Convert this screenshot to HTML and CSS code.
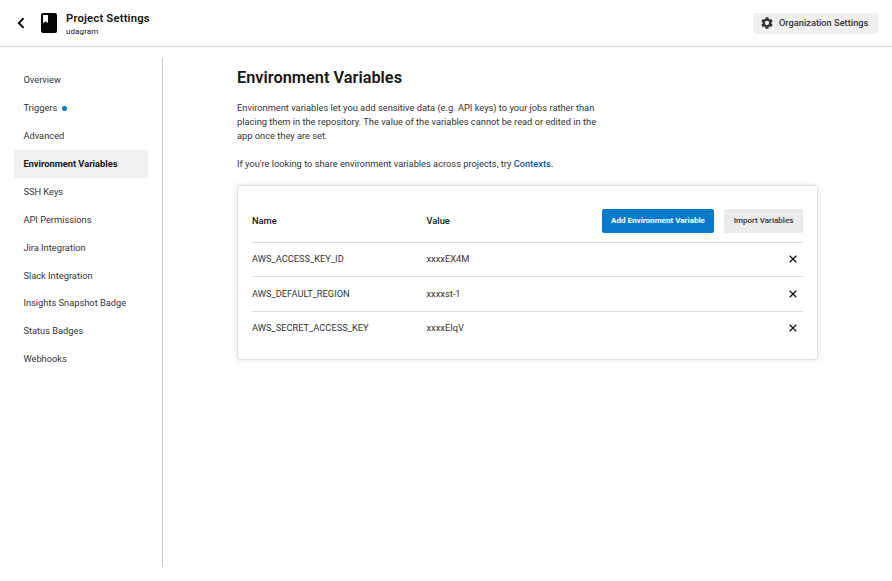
FILE: index.html
```html
<!DOCTYPE html>
<html lang="en">
<head>
<meta charset="utf-8">
<title>Project Settings</title>
<link rel="stylesheet" href="styles.css">
</head>
<body>
<header class="header">
  <svg class="back" viewBox="0 0 8 12"><path d="M6.600 1.200 1.800 6l4.800 4.800" fill="none" stroke="#161616" stroke-width="2"/></svg>
  <svg class="book" viewBox="0 0 16 20"><path fill="#050505" fill-rule="evenodd" d="M2 0h12a2 2 0 0 1 2 2v16a2 2 0 0 1-2 2H2a2 2 0 0 1-2-2V2a2 2 0 0 1 2-2zm0 2v8l2.500-1.500L7 10V2z"/></svg>
  <div class="heading">
    <div class="project">Project Settings</div>
    <div class="repo">udagram</div>
  </div>
  <button class="org"><svg class="gear" viewBox="2 2 20 20"><path fill="#333" d="M19.140 12.940c.040-.300.060-.610.060-.940 0-.320-.020-.640-.070-.940l2.030-1.580a.49.49 0 0 0 .120-.610l-1.920-3.320a.488.488 0 0 0-.590-.220l-2.390.960c-.500-.380-1.030-.700-1.620-.940l-.360-2.540a.484.484 0 0 0-.480-.410h-3.840c-.240 0-.430.170-.470.410l-.360 2.540c-.590.240-1.130.570-1.620.940l-2.390-.960a.488.488 0 0 0-.590.220L2.740 8.870c-.120.210-.080.470.120.610l2.030 1.580c-.050.300-.090.630-.090.940s.020.640.070.940l-2.030 1.580a.49.49 0 0 0-.120.610l1.920 3.320c.120.220.370.290.590.220l2.390-.960c.500.380 1.030.700 1.620.940l.360 2.540c.050.240.240.410.480.410h3.840c.240 0 .440-.170.470-.410l.360-2.540c.590-.240 1.130-.560 1.620-.940l2.390.960c.220.080.470 0 .590-.220l1.920-3.320a.49.49 0 0 0-.120-.610zM12 15.600a3.600 3.600 0 1 1 0-7.200 3.600 3.600 0 0 1 0 7.200z"/></svg><span>Organization Settings</span></button>
</header>
<div class="body">
  <nav class="nav">
    <a class="item">Overview</a>
    <a class="item">Triggers<i class="dot"></i></a>
    <a class="item">Advanced</a>
    <a class="item active">Environment Variables</a>
    <a class="item">SSH Keys</a>
    <a class="item">API Permissions</a>
    <a class="item">Jira Integration</a>
    <a class="item">Slack Integration</a>
    <a class="item">Insights Snapshot Badge</a>
    <a class="item">Status Badges</a>
    <a class="item">Webhooks</a>
  </nav>
  <main class="main">
    <h1>Environment Variables</h1>
    <p>Environment variables let you add sensitive data (e.g. API keys) to your jobs rather than<br>placing them in the repository. The value of the variables cannot be read or edited in the<br>app once they are set.</p>
    <p>If you're looking to share environment variables across projects, try <a class="link">Contexts.</a></p>
    <section class="card">
      <div class="row head">
        <span>Name</span><span>Value</span>
        <div class="actions"><button class="btn primary">Add Environment Variable</button><button class="btn">Import Variables</button></div>
      </div>
      <div class="row"><span>AWS_ACCESS_KEY_ID</span><span>xxxxEX4M</span><svg class="x" viewBox="0 0 8 8"><path d="m.7.7 6.600 6.600m0-6.600L.7 7.300"/></svg></div>
      <div class="row"><span>AWS_DEFAULT_REGION</span><span>xxxxst-1</span><svg class="x" viewBox="0 0 8 8"><path d="m.7.7 6.600 6.600m0-6.600L.7 7.300"/></svg></div>
      <div class="row"><span>AWS_SECRET_ACCESS_KEY</span><span>xxxxEIqV</span><svg class="x" viewBox="0 0 8 8"><path d="m.7.7 6.600 6.600m0-6.600L.7 7.300"/></svg></div>
    </section>
  </main>
</div>
</body>
</html>
```
FILE: styles.css
```css
* { box-sizing: border-box; }
body {
  margin: 0;
  background: #fff;
  color: #343434;
  font: 9.29px/14px Roboto, sans-serif;
}
.header {
  display: flex;
  align-items: center;
  height: 47px;
  padding: 0 14px 0 17px;
  border-bottom: 1px solid #d6d6d6;
}
.back { width: 8px; height: 12px; margin-right: 16px; }
.book { width: 16px; height: 20px; margin-top: -1px; }
.heading { margin: 3px 0 0 9px; color: #161616; }
.project { font-size: 11.3px; font-weight: 600; line-height: 14px; letter-spacing: .17px; }
.repo { font-size: 8px; line-height: 12px; letter-spacing: .1px; }
.org {
  display: flex;
  align-items: center;
  gap: 6px;
  width: 125px;
  height: 21px;
  margin-left: auto;
  padding: 0 0 0 8px;
  border: 0;
  border-radius: 3px;
  background: #f0f0f0;
  color: #343434;
  font: 500 9.25px/14px Roboto, sans-serif;
  white-space: nowrap;
}
.gear { width: 12px; height: 12px; }
.body { display: flex; }
.nav {
  width: 163px;
  height: 509px;
  margin-top: 11px;
  padding: 8px 14px 0;
  border-right: 1px solid #ccc;
}
.item {
  display: flex;
  align-items: center;
  height: 27.95px;
  padding-left: 9.4px;
  white-space: nowrap;
}
.active { background: #f0f0f0; color: #161616; font-weight: 700; }
.dot {
  width: 5px;
  height: 5px;
  margin: 2px 0 0 4.5px;
  border-radius: 50%;
  background: #047dd0;
}
.main { width: 581px; margin-left: 74px; padding-top: 21px; }
h1 {
  margin: 0 0 13px;
  color: #161616;
  font-size: 16.35px;
  font-weight: 600;
  line-height: 20px;
}
p { margin: 0 0 14px; white-space: nowrap; }
.link { color: #0b5aa8; font-weight: 500; }
.card {
  height: 175px;
  padding: 14px 14px 0;
  border: 1px solid #e2e2e2;
  border-radius: 3px;
  box-shadow: 0 0 6px rgba(0, 0, 0, .1);
}
.row {
  display: grid;
  grid-template-columns: 174.5px 1fr auto;
  align-items: center;
  height: 34.5px;
}
.row + .row { border-top: 1px solid #dedede; }
.row.head + .row { height: 34px; padding-bottom: 1px; }
.row:last-child { height: 34px; }
.row.head { height: 42px; color: #161616; font-weight: 500; }
.actions { display: flex; gap: 10px; }
.btn {
  width: 79px;
  height: 24px;
  padding: 0;
  border: 0;
  border-radius: 2px;
  background: #ebebeb;
  color: #343434;
  font: 500 8.05px/12px Roboto, sans-serif;
  white-space: nowrap;
}
.primary { width: 112px; background: #047acb; color: #fff; font-weight: 700; }
.x {
  width: 8px;
  height: 8px;
  margin-right: 6px;
  fill: none;
  stroke: #161616;
  stroke-width: 1.3;
}
```
